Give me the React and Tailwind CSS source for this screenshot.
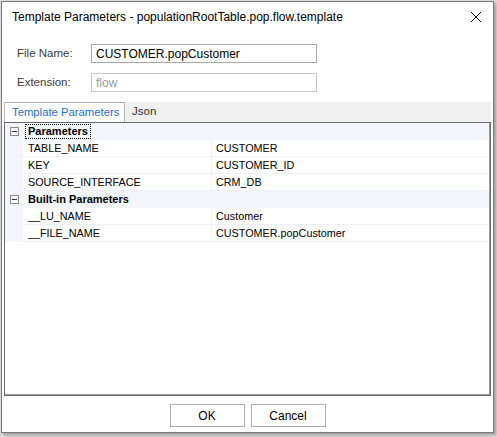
import React from "react";

const font = { fontFamily: '"Liberation Sans", Arial, sans-serif' };

function MinusBox() {
  return (
    <div className="w-[9px] h-[9px] border border-[#8c8c8c] bg-white flex items-center justify-center">
      <div className="w-[5px] h-px bg-[#333]" />
    </div>
  );
}

function HeaderRow({ label, focused }) {
  return (
    <div className="flex h-[17px] bg-[#f3f6fb]">
      <div className="w-[18px] flex items-center justify-center pl-[1px]">
        <MinusBox />
      </div>
      <div className="flex items-center pl-[2px]">
        <span
          className={
            "font-bold text-[11px] text-black leading-[13px] px-[2px] whitespace-nowrap " +
            (focused ? "border border-dotted border-black" : "border border-transparent")
          }
        >
          {label}
        </span>
      </div>
    </div>
  );
}

function DataRow({ name, value }) {
  return (
    <div className="flex h-[17px]">
      <div className="w-[18px] bg-[#f3f6fb]" />
      <div className="flex flex-1 border-b border-[#edf0f5] bg-white">
        <div className="w-[189px] border-r border-[#edf0f5] flex items-center pl-[5px] text-[10.8px] text-black whitespace-nowrap">
          {name}
        </div>
        <div className="flex-1 flex items-center pl-[4px] text-[10.8px] text-black whitespace-nowrap">{value}</div>
      </div>
    </div>
  );
}

export default function App() {
  return (
    <div className="w-[497px] h-[437px] bg-[#dcdcdc] pt-px pl-px" style={font}>
      <div className="w-[493px] h-[432px] border border-[#7a7a7a] bg-white flex flex-col shadow-[2px_2px_3px_rgba(0,0,0,0.3)]">
        {/* title bar */}
        <div className="h-[29px] flex items-center justify-between pl-[10px] pr-[9px]">
          <span className="text-[12px] text-black whitespace-nowrap">Template Parameters - populationRootTable.pop.flow.template</span>
          <svg width="12" height="12" viewBox="0 0 12 12" className="mr-[2px]">
            <path d="M1 1 L11 11 M11 1 L1 11" stroke="#111" strokeWidth="1" />
          </svg>
        </div>

        {/* form */}
        <div className="mt-[13px] flex items-center pl-[15px]">
          <span className="w-[74px] text-[11.5px] text-[#3c3c3c] whitespace-nowrap">File Name:</span>
          <div className="w-[226px] h-[19px] border border-[#a9a9a9] flex items-center pl-[4px] text-[12px] text-black whitespace-nowrap">
            CUSTOMER.popCustomer
          </div>
        </div>
        <div className="mt-[10px] flex items-center pl-[15px]">
          <span className="w-[74px] text-[11.5px] text-[#3c3c3c] whitespace-nowrap">Extension:</span>
          <div className="w-[226px] h-[19px] border border-[#c8c8c8] flex items-center pl-[4px] text-[12px] text-[#9a9a9a]">
            flow
          </div>
        </div>

        {/* tabs */}
        <div className="mt-[10px] mx-[2px] h-[20px] bg-[#f0f0f0] flex items-end">
          <div className="w-[121px] h-[20px] bg-white border border-b-0 border-[#b4b4b4] flex items-center pl-[7px] text-[11.3px] text-[#1f6fd1] whitespace-nowrap">
            Template Parameters
          </div>
          <div className="h-[20px] flex items-center pl-[7px] text-[11.5px] text-[#333]">Json</div>
        </div>

        {/* grid panel */}
        <div className="mx-[2px] h-[274px] border border-[#6a6a6a] flex flex-col">
          <div className="flex-1 border-r border-b border-[#9c9c9c] flex flex-col">
            <HeaderRow label="Parameters" focused />
            <DataRow name="TABLE_NAME" value="CUSTOMER" />
            <DataRow name="KEY" value="CUSTOMER_ID" />
            <DataRow name="SOURCE_INTERFACE" value="CRM_DB" />
            <HeaderRow label="Built-in Parameters" />
            <DataRow name="__LU_NAME" value="Customer" />
            <DataRow name="__FILE_NAME" value="CUSTOMER.popCustomer" />
          </div>
        </div>

        {/* buttons */}
        <div className="mt-[8px] flex justify-center gap-[6px]">
          <button className="w-[75px] h-[23px] border border-[#adadad] bg-white text-[12px] text-black">OK</button>
          <button className="w-[75px] h-[23px] border border-[#adadad] bg-white text-[12px] text-black">Cancel</button>
        </div>
      </div>
    </div>
  );
}
